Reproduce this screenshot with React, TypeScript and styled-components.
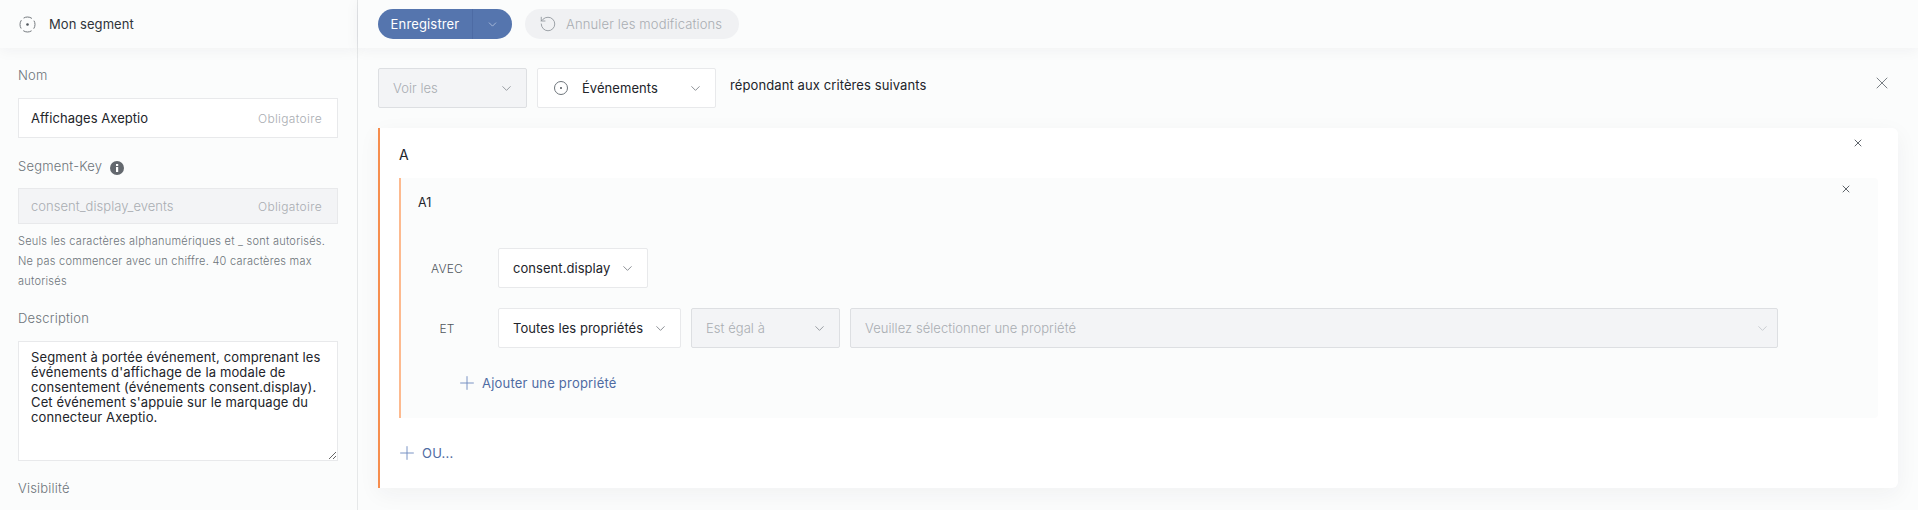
import { createGlobalStyle, styled } from "styled-components";
import { ChevronDown, Plus, RotateCcw, X } from "lucide-react";

const Global = createGlobalStyle`
html, body { margin: 0; padding: 0; background: #fbfcfc; }
* { box-sizing: border-box; }
body { font-family: Inter, "Liberation Sans", sans-serif; font-size: 13px; letter-spacing: 0.05px; color: #22242a; }
`;

const Page = styled.div`
  display: flex;
  height: 510px;
  overflow: hidden;
  background: #fbfcfc;
`;

const Sidebar = styled.aside`
  width: 358px;
  flex: none;
  border-right: 1px solid #e6e8e9;
`;

const Bar = styled.header`
  height: 48px;
  display: flex;
  align-items: center;
  background: #fbfcfc;
  box-shadow: 0 2px 14px rgba(30, 40, 50, 0.05);
  position: relative;
`;

const SideBar = styled(Bar)`
  padding-left: 19px;
  gap: 13px;
  color: #30343a;
`;

const Form = styled.div`
  padding: 19px 19px 0 18px;
`;

const Label = styled.div<{ $top?: number }>`
  display: flex;
  align-items: center;
  gap: 8px;
  height: 16px;
  line-height: 16px;
  margin-top: ${(p) => p.$top ?? 0}px;
  color: #6d747a;
  font-weight: 300;
  letter-spacing: 0.2px;
  svg {
    margin-top: 3px;
  }
`;

const Field = styled.div<{ $disabled?: boolean }>`
  display: flex;
  align-items: center;
  justify-content: space-between;
  height: ${(p) => (p.$disabled ? 36 : 40)}px;
  margin-top: ${(p) => (p.$disabled ? 14 : 15)}px;
  padding: 0 15px 0 12px;
  border: 1px solid #e8e9eb;
  background: ${(p) => (p.$disabled ? "#f3f4f6" : "#fff")};
  color: ${(p) => (p.$disabled ? "#a9adb2" : "#22242a")};
  font-weight: ${(p) => (p.$disabled ? 300 : 400)};
`;

const Required = styled.span`
  font-size: 12px;
  font-weight: 300;
  letter-spacing: 0.35px;
  color: #a9adb2;
`;

const Hint = styled.p`
  margin: 7px 0 0;
  font-size: 11px;
  line-height: 20px;
  font-weight: 300;
  letter-spacing: 0.25px;
  color: #6d747a;
`;

const Area = styled.textarea`
  display: block;
  width: 100%;
  height: 120px;
  margin: 15px 0 0;
  padding: 8px 12px;
  border: 1px solid #e8e9eb;
  outline: none;
  background: #fff;
  font: 400 13px/15px Inter, "Liberation Sans", sans-serif;
  letter-spacing: 0.14px;
  color: #22242a;
`;

const Main = styled.main`
  flex: 1;
  min-width: 0;
`;

const ActionBar = styled(Bar)`
  padding-left: 20px;
  gap: 13px;
`;

const Save = styled.div`
  display: flex;
  align-items: center;
  width: 134px;
  height: 30px;
  border-radius: 15px;
  background: #5575ae;
  color: #fff;
`;

const SaveLabel = styled.span`
  width: 95px;
  height: 100%;
  line-height: 30px;
  text-align: center;
  letter-spacing: 0.15px;
  border-right: 1px solid #4d6ba4;
`;

const SaveArrow = styled.span`
  flex: 1;
  display: flex;
  justify-content: center;
  color: #b6c5e0;
`;

const Cancel = styled.div`
  display: flex;
  align-items: center;
  gap: 9px;
  width: 214px;
  height: 30px;
  padding-left: 14px;
  border-radius: 15px;
  background: #f0f1f3;
  color: #a9adb2;
  font-weight: 300;
  letter-spacing: 0.15px;
  svg {
    color: #8b9096;
  }
`;

const Content = styled.div`
  padding: 20px 20px 0;
`;

const Filters = styled.div`
  display: flex;
  align-items: flex-start;
  gap: 10px;
`;

const Select = styled.div<{ $width: number; $disabled?: boolean; $wide?: boolean }>`
  display: flex;
  align-items: center;
  justify-content: space-between;
  width: ${(p) => p.$width}px;
  height: 40px;
  flex: none;
  padding: 0 ${(p) => (p.$wide ? 7 : 12)}px 0 14px;
  border: 1px solid ${(p) => (p.$disabled ? "#dddfe2" : "#e8e9eb")};
  border-radius: 2px;
  background: ${(p) => (p.$disabled ? "#f3f4f6" : "#fff")};
  color: ${(p) => (p.$disabled ? "#a9adb2" : "#22242a")};
  font-weight: ${(p) => (p.$disabled ? 300 : 400)};
  svg {
    color: ${(p) => (p.$wide ? "#c4c7cb" : p.$disabled ? "#8b9096" : "#7b8086")};
  }
`;

const SelectText = styled.span`
  display: flex;
  align-items: center;
  gap: 14px;
  margin-left: 2px;
`;

const Sentence = styled.span`
  margin: 7px 0 0 4px;
  line-height: 20px;
  letter-spacing: 0.1px;
`;

const CloseAll = styled.span`
  margin: 5px 6px 0 auto;
  color: #6d747a;
  line-height: 0;
`;

const Card = styled.section`
  margin-top: 20px;
  height: 360px;
  padding: 0 20px 0 19px;
  border-left: 2px solid #f68d4d;
  border-radius: 0 6px 6px 0;
  background: #fff;
  box-shadow: 0 6px 22px rgba(30, 40, 50, 0.05);
`;

const CardHead = styled.div`
  display: flex;
  justify-content: space-between;
  height: 50px;
  padding-top: 19px;
  font-size: 14px;
  line-height: 16px;
`;

const CardClose = styled.span`
  margin: -10px 14px 0 0;
  color: #5f656b;
  line-height: 0;
`;

const Group = styled.div`
  height: 240px;
  border-left: 2px solid #fdba8f;
  border-radius: 0 4px 4px 0;
  background: #fbfcfc;
`;

const GroupHead = styled.div`
  display: flex;
  justify-content: space-between;
  height: 70px;
  padding: 17px 0 0 17px;
  font-size: 12.5px;
  line-height: 16px;
`;

const GroupClose = styled.span`
  margin: -12px 26px 0 0;
  color: #5f656b;
  line-height: 0;
`;

const Row = styled.div`
  display: flex;
  align-items: center;
  gap: 10px;
  margin-bottom: 20px;
  padding-left: 12px;
`;

const RowLabel = styled.span`
  width: 68px;
  margin-right: 7px;
  text-align: center;
  font-size: 12px;
  font-weight: 300;
  letter-spacing: 0.2px;
  color: #50565c;
`;

const AddLink = styled.div<{ $left: number }>`
  display: flex;
  align-items: center;
  gap: 4px;
  height: 16px;
  margin-left: ${(p) => p.$left}px;
  color: #4f6ba3;
  font-size: 13px;
  letter-spacing: 0.2px;
  svg {
    flex: none;
    color: #6f8abf;
  }
`;

const AddProperty = styled(AddLink)`
  margin-top: 27px;
`;

const AddOr = styled(AddLink)`
  margin-top: 27px;
`;

function SegmentIcon() {
  return (
    <svg width="17" height="17" viewBox="0 0 17 17" fill="none" stroke="#74797e">
      <circle cx="8.5" cy="8.5" r="7.5" strokeDasharray="8.8 3" strokeDashoffset="4.4" />
      <circle cx="8.5" cy="8.5" r="1.3" fill="#50565c" stroke="none" />
    </svg>
  );
}

function EventIcon() {
  return (
    <svg width="14" height="14" viewBox="0 0 14 14" fill="none" stroke="#6d747a">
      <circle cx="7" cy="7" r="6.5" />
      <circle cx="7" cy="7" r="1" fill="#50565c" stroke="none" />
    </svg>
  );
}

function InfoIcon() {
  return (
    <svg width="14" height="14" viewBox="0 0 14 14">
      <circle cx="7" cy="7" r="7" fill="#63686e" />
      <rect x="6" y="6" width="2.2" height="5" fill="#fff" />
      <rect x="6" y="3" width="2.2" height="2" fill="#fff" />
    </svg>
  );
}

const Chevron = () => <ChevronDown size={15} strokeWidth={1.4} />;

export default function App() {
  return (
    <Page>
      <Global />
      <Sidebar>
        <SideBar>
          <SegmentIcon />
          <span>Mon segment</span>
        </SideBar>
        <Form>
          <Label>Nom</Label>
          <Field>
            <span>Affichages Axeptio</span>
            <Required>Obligatoire</Required>
          </Field>
          <Label $top={20}>
            Segment-Key
            <InfoIcon />
          </Label>
          <Field $disabled>
            <span>consent_display_events</span>
            <Required>Obligatoire</Required>
          </Field>
          <Hint>
            Seuls les caractères alphanumériques et _ sont autorisés. Ne pas commencer avec un chiffre. 40 caractères
            max autorisés
          </Hint>
          <Label $top={19}>Description</Label>
          <Area
            readOnly
            defaultValue="Segment à portée événement, comprenant les événements d'affichage de la modale de consentement (événements consent.display). Cet événement s'appuie sur le marquage du connecteur Axeptio."
          />
          <Label $top={19}>Visibilité</Label>
        </Form>
      </Sidebar>
      <Main>
        <ActionBar>
          <Save>
            <SaveLabel>Enregistrer</SaveLabel>
            <SaveArrow>
              <ChevronDown size={13} strokeWidth={1.5} />
            </SaveArrow>
          </Save>
          <Cancel>
            <RotateCcw size={18} strokeWidth={1.1} />
            Annuler les modifications
          </Cancel>
        </ActionBar>
        <Content>
          <Filters>
            <Select $width={149} $disabled>
              Voir les
              <Chevron />
            </Select>
            <Select $width={179}>
              <SelectText>
                <EventIcon />
                Événements
              </SelectText>
              <Chevron />
            </Select>
            <Sentence>répondant aux critères suivants</Sentence>
            <CloseAll>
              <X size={20} strokeWidth={1.1} />
            </CloseAll>
          </Filters>
          <Card>
            <CardHead>
              A
              <CardClose>
                <X size={12} strokeWidth={2} />
              </CardClose>
            </CardHead>
            <Group>
              <GroupHead>
                A1
                <GroupClose>
                  <X size={12} strokeWidth={2} />
                </GroupClose>
              </GroupHead>
              <Row>
                <RowLabel>AVEC</RowLabel>
                <Select $width={150}>
                  consent.display
                  <Chevron />
                </Select>
              </Row>
              <Row>
                <RowLabel>ET</RowLabel>
                <Select $width={183}>
                  Toutes les propriétés
                  <Chevron />
                </Select>
                <Select $width={149} $disabled>
                  Est égal à
                  <Chevron />
                </Select>
                <Select $width={928} $disabled $wide>
                  Veuillez sélectionner une propriété
                  <Chevron />
                </Select>
              </Row>
              <AddProperty $left={55}>
                <Plus size={22} strokeWidth={1} />
                Ajouter une propriété
              </AddProperty>
            </Group>
            <AddOr $left={-3}>
              <Plus size={22} strokeWidth={1} />
              OU...
            </AddOr>
          </Card>
        </Content>
      </Main>
    </Page>
  );
}
